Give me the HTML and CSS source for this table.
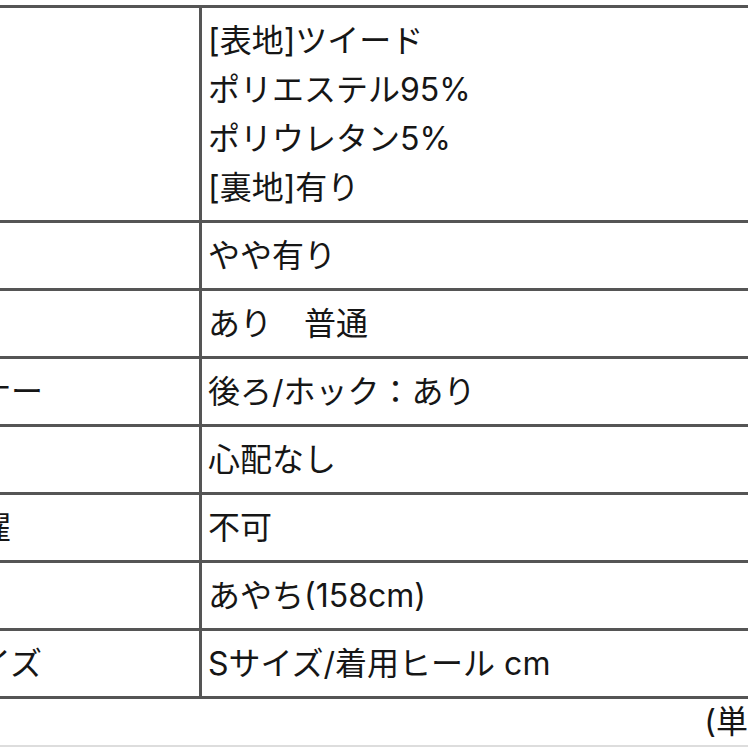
FILE: index.html
```html
<!DOCTYPE html>
<html lang="ja">
<head>
<meta charset="utf-8">
<link rel="stylesheet" href="styles.css">
</head>
<body>
<div class="wrap">
  <table class="spec">
    <tr>
      <th>素材</th>
      <td>[表地]ツイード<br>ポリエステル95%<br>ポリウレタン5%<br>[裏地]有り</td>
    </tr>
    <tr><th>伸縮性</th><td>やや有り</td></tr>
    <tr><th>厚さ</th><td>あり　普通</td></tr>
    <tr><th>ファスナー</th><td>後ろ/ホック：あり</td></tr>
    <tr><th>透け感</th><td>心配なし</td></tr>
    <tr><th>自宅洗濯</th><td>不可</td></tr>
    <tr><th>モデル</th><td>あやち(158cm)</td></tr>
    <tr><th>着用サイズ</th><td>Sサイズ/着用ヒール cm</td></tr>
  </table>
  <div class="note">(単位：cm)</div>
  <div class="rule"></div>
</div>
</body>
</html>
```

FILE: styles.css
```css
html, body {
  margin: 0;
  padding: 0;
  background: #ffffff;
  overflow: hidden;
}
body {
  font-family: "Inter", "Noto Sans CJK JP", sans-serif;
  color: #161616;
  font-size: 32px;
}
.wrap {
  width: 1010px;
  margin-left: -140px;
  padding-top: 5px;
}
.spec {
  border-collapse: collapse;
  width: 1010px;
  table-layout: fixed;
}
.spec th,
.spec td {
  border: 3px solid #555555;
  padding: 8px 6px;
  line-height: 49px;
  font-weight: 400;
  vertical-align: middle;
  white-space: nowrap;
  overflow: hidden;
}
.spec th {
  width: 310px;
  padding-left: 20px;
  padding-right: 6px;
  text-align: left;
}
.spec td {
  text-align: left;
}
.note {
  text-align: right;
  line-height: 46px;
  height: 46px;
}
.rule {
  border-top: 2px solid #dddddd;
}
```
